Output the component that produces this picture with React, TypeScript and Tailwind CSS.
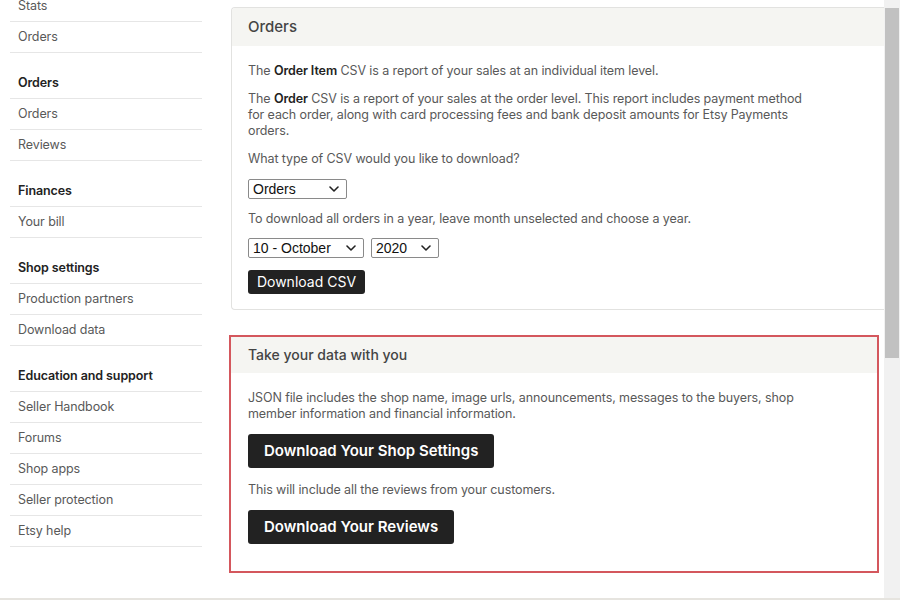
type Section = { title?: string; items: string[] };

const sections: Section[] = [
  { items: ["Stats", "Orders"] },
  { title: "Orders", items: ["Orders", "Reviews"] },
  { title: "Finances", items: ["Your bill"] },
  { title: "Shop settings", items: ["Production partners", "Download data"] },
  {
    title: "Education and support",
    items: ["Seller Handbook", "Forums", "Shop apps", "Seller protection", "Etsy help"],
  },
];

function Chevron() {
  return (
    <svg
      className="pointer-events-none absolute right-[8px] top-1/2 -translate-y-1/2"
      width="10"
      height="6"
      viewBox="0 0 10 6"
      fill="none"
    >
      <path d="M1 1l4 4 4-4" stroke="#222" strokeWidth="1.6" strokeLinecap="round" strokeLinejoin="round" />
    </svg>
  );
}

function Dropdown({ width, value, options }: { width: string; value: string; options: string[] }) {
  return (
    <div className={`relative ${width}`}>
      <select
        defaultValue={value}
        className="h-[20px] w-full appearance-none rounded-[2px] border border-[#8a8a8a] bg-white pl-[4px] font-['Liberation_Sans',Arial,sans-serif] text-[14px] leading-[18px] tracking-normal text-[#111]"
      >
        {options.map((o) => (
          <option key={o}>{o}</option>
        ))}
      </select>
      <Chevron />
    </div>
  );
}

function Sidebar() {
  return (
    <aside className="-mt-[9px] ml-[10px] w-[192px] shrink-0 text-[12.5px] tracking-[-0.1px] text-[#595959]">
      {sections.map((s, i) => (
        <div key={i} className={i > 0 ? "mt-[15px]" : ""}>
          {s.title && (
            <div className="flex h-[31px] items-center border-b border-[#e6e6e6] pl-2 font-semibold text-[#222]">
              {s.title}
            </div>
          )}
          {s.items.map((item) => (
            <div key={item} className="flex h-[31px] items-center border-b border-[#e6e6e6] pl-2">
              {item}
            </div>
          ))}
        </div>
      ))}
    </aside>
  );
}

function OrdersPanel() {
  return (
    <section className="ml-[2px] w-[653px] overflow-hidden rounded-l-[4px] border border-r-0 border-[#e2e2e0] bg-white">
      <div className="flex h-[38px] items-center bg-[#f5f5f2] px-4 text-[15px] font-medium text-[#444]">
        Orders
      </div>
      <div className="flex flex-col gap-3 px-4 pt-[17px] pb-[15px] text-[12.5px] leading-[16px] tracking-[-0.1px] text-[#595959]">
        <p>
          The <b className="font-semibold text-[#222]">Order Item</b> CSV is a report of your sales at an individual
          item level.
        </p>
        <p className="w-[560px]">
          The <b className="font-semibold text-[#222]">Order</b> CSV is a report of your sales at the order level. This
          report includes payment method for each order, along with card processing fees and bank deposit amounts for
          Etsy Payments orders.
        </p>
        <p>What type of CSV would you like to download?</p>
        <Dropdown width="w-[99px]" value="Orders" options={["Orders", "Order Items"]} />
        <p>To download all orders in a year, leave month unselected and choose a year.</p>
        <div className="-mt-[1px] flex gap-[7px]">
          <Dropdown width="w-[116px]" value="10 - October" options={["10 - October", "11 - November"]} />
          <Dropdown width="w-[68px]" value="2020" options={["2020", "2019"]} />
        </div>
        <button className="h-[24px] w-[117px] rounded-[3px] bg-[#222] text-[14px] tracking-normal text-white">
          Download CSV
        </button>
      </div>
    </section>
  );
}

function ExportPanel() {
  return (
    <section className="mt-[25px] w-[650px] border-2 border-[#d4575d] bg-white">
      <div className="flex h-[36px] items-center bg-[#f5f5f2] px-[17px] pb-[1px] text-[14px] font-medium text-[#444]">
        Take your data with you
      </div>
      <div className="flex flex-col items-start px-[17px] pt-[17px] pb-[27px] text-[12.5px] leading-[16px] tracking-[-0.1px] text-[#595959]">
        <p className="w-[560px]">
          JSON file includes the shop name, image urls, announcements, messages to the buyers, shop member information
          and financial information.
        </p>
        <button className="mt-[12px] h-[34px] rounded-[3px] bg-[#222] px-4 text-[15px] font-semibold tracking-normal text-white">
          Download Your Shop Settings
        </button>
        <p className="mt-[14px]">This will include all the reviews from your customers.</p>
        <button className="mt-[12px] h-[34px] rounded-[3px] bg-[#222] px-4 text-[15px] font-semibold tracking-normal text-white">
          Download Your Reviews
        </button>
      </div>
    </section>
  );
}

export default function App() {
  return (
    <div className="flex h-[600px] w-[900px] flex-col overflow-hidden bg-white font-['Inter',sans-serif]">
      <div className="flex min-h-0 flex-1">
        <Sidebar />
        <main className="ml-[27px] w-[655px] shrink-0 pt-[7px]">
          <OrdersPanel />
          <ExportPanel />
        </main>
        <div className="ml-auto w-[16px] bg-[#f1f1f1]">
          <div className="mx-[1px] mt-[8px] h-[350px] bg-[#c1c1c1]" />
        </div>
      </div>
      <div className="h-[2px] bg-[#e6e4df]" />
    </div>
  );
}
